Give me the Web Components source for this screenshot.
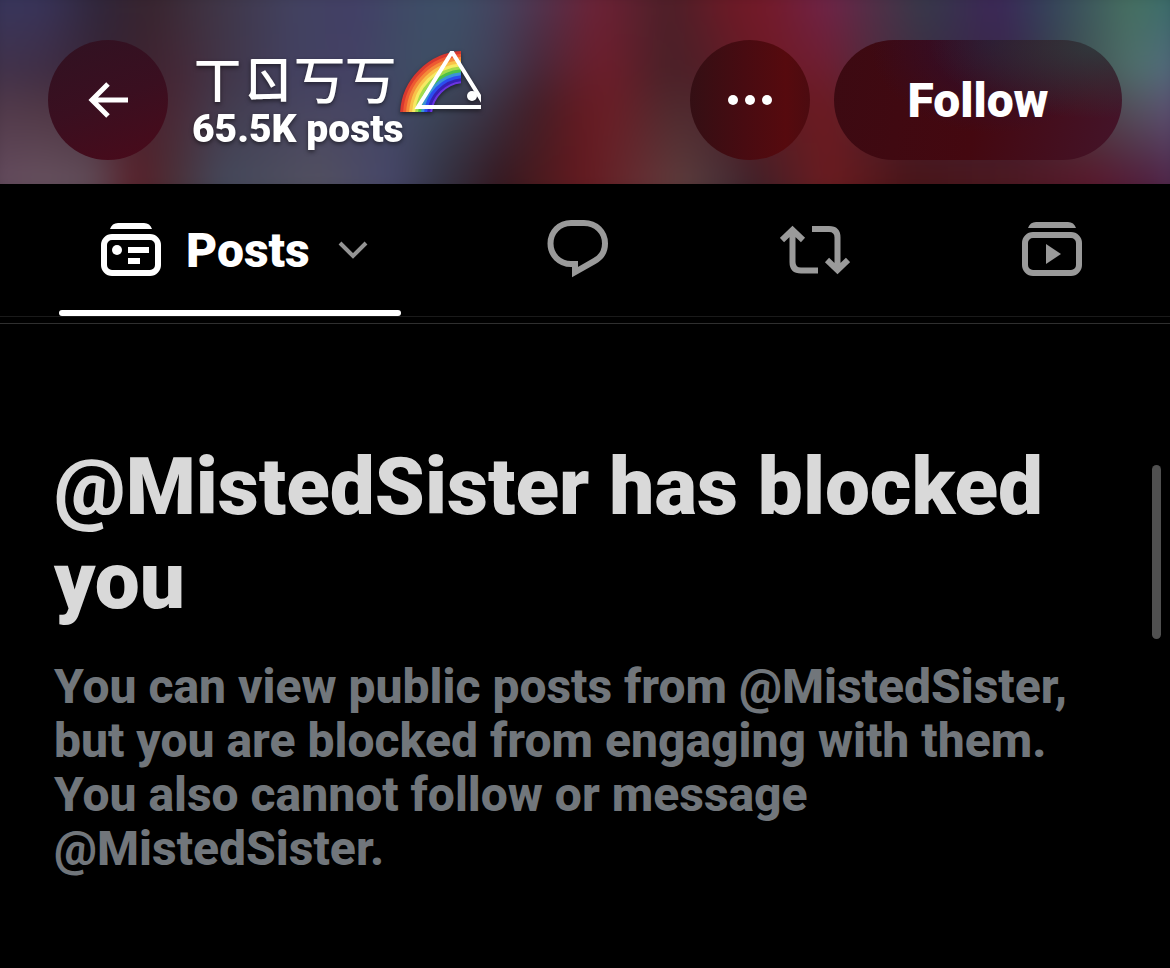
<!DOCTYPE html>
<html lang="en">
<head>
<meta charset="utf-8">
<meta name="viewport" content="width=device-width, initial-scale=1">
<title>Profile</title>
<style>
    body{
        margin:0;
        min-height:100vh;
        background:#000;
        color:#fff;
        font-family:Roboto, "Liberation Sans", sans-serif;
    }
</style>
</head>
<body>
<profile-page>
    <profile-header slot="header" posts="65.5K posts">ㄒㄖ丂丂</profile-header>
    <profile-tabs slot="tabs"></profile-tabs>
    <blocked-notice>
        <span slot="title">@MistedSister has blocked you</span>
        You can view public posts from @MistedSister, but you are blocked from engaging with them. You also cannot follow or message @MistedSister.
    </blocked-notice>
</profile-page>

<script>
const makeTemplate = (html) => {
    const template = document.createElement('template');
    template.innerHTML = html;
    return template;
};

const pageTemplate = makeTemplate(`
<style>
    :host{
        display:block;
        position:relative;
        min-height:100vh;
    }
    /* scroll indicator, lies over the content */
    .thumb{
        position:absolute;
        right:9px;
        top:48%;
        width:9px;
        height:18%;
        border-radius:5px;
        background:#505050;
    }
</style>
<slot name="header"></slot>
<slot name="tabs"></slot>
<main><slot></slot></main>
<div class="thumb"></div>
`);

class ProfilePage extends HTMLElement {
    constructor(){
        super();
        this.attachShadow({mode:'open'});
        this.shadowRoot.appendChild(pageTemplate.content.cloneNode(true));
    }
}

const bannerTemplate = makeTemplate(`
<style>
    :host{
        display:grid;
        overflow:hidden;
    }
    :host > *{
        grid-area:1 / 1;
    }
    .cover{
        display:grid;
        margin:-20px;
        filter:blur(12px);
    }
    .cover > div{
        grid-area:1 / 1;
    }
    .middle{
        background:linear-gradient(90deg, #4a3444 0%, #452a38 6%, #3c2230 11%, #4a2636 16%, #42384c 21%, #444060 26%, #454364 31%, #3f5064 37%, #3f3f54 42%, #42202c 46%, #5e1c24 49%, #6d1c26 52%, #482228 57%, #4c2028 60%, #6c1a22 65%, #6e1a22 70%, #502838 74%, #3a2840 80%, #3a2842 86%, #44504c 91%, #587078 96%, #686090 100%);
    }
    .top{
        background:linear-gradient(90deg, #38365c 0%, #38345a 5%, #30263a 10%, #38242e 14%, #3f3444 19%, #424260 26%, #423f66 31%, #3f4a66 35%, #3d5068 39%, #45435f 43%, #55304a 47%, #6d2236 51%, #4c1f28 57%, #6c1a26 62%, #741a2a 65%, #6e2448 70%, #503048 74%, #36394a 78%, #3c2657 84%, #34405a 88%, #467060 95%, #356a70 100%);
        mask-image:linear-gradient(#000 10%, transparent 60%);
    }
    .bottom{
        background:linear-gradient(90deg, #62485c 0%, #66505e 5%, #604c58 9%, #582029 13%, #4a3038 16%, #44485a 20%, #525060 28%, #464668 34%, #343344 38%, #351820 43%, #4a1a1e 46%, #641a20 50%, #643034 55%, #5c3c3c 58%, #4a3238 61%, #402028 64%, #6a1c20 70%, #481418 77%, #4c1820 85%, #58182c 92%, #502040 97%, #503058 100%);
        mask-image:linear-gradient(transparent 40%, #000 90%);
    }
    .content{
        position:relative;
    }
</style>
<div class="cover">
    <div class="middle"></div>
    <div class="top"></div>
    <div class="bottom"></div>
</div>
<div class="content"><slot></slot></div>
`);

// Blurred cover photo, built from three colour rows faded into each other
class BlurBanner extends HTMLElement {
    constructor(){
        super();
        this.attachShadow({mode:'open'});
        this.shadowRoot.appendChild(bannerTemplate.content.cloneNode(true));
    }
}

const headerTemplate = makeTemplate(`
<style>
    :host{
        display:block;
    }
    header{
        display:flex;
        align-items:center;
        gap:24px;
        padding:40px 48px 24px;
    }
    button{
        display:flex;
        flex:none;
        align-items:center;
        justify-content:center;
        width:120px;
        height:120px;
        padding:0;
        border:none;
        border-radius:60px;
        color:#fff;
        font:900 48px Roboto, "Liberation Sans", sans-serif;
        cursor:pointer;
    }
    .back{
        background:linear-gradient(160deg, #301222, #3a0f20 50%, #4a0a1a);
    }
    .more{
        background:linear-gradient(90deg, #340f14, #480b11 45%, #560a0e 80%, #4c0b10);
    }
    .follow{
        width:288px;
        background:
            radial-gradient(ellipse at 92% 5%, #30383c, transparent 45%),
            radial-gradient(ellipse at 55% 0%, #2c1030, transparent 55%),
            linear-gradient(100deg, #3c0a12, #440810 50%, #44142a);
    }
    .title{
        flex:1;
        min-width:0;
        padding-bottom:4px;
        filter:drop-shadow(0 2px 2px rgba(0,0,0,.5));
    }
    h1{
        display:flex;
        align-items:flex-start;
        gap:4px;
        margin:0;
        font:500 51px/52px "Noto Sans CJK TC", "Noto Sans CJK SC", sans-serif;
    }
    p{
        margin:0;
        font-size:39px;
        font-weight:900;
        line-height:34px;
    }
    svg{
        display:block;
        flex:none;
    }
</style>
<blur-banner>
    <header>
        <button class="back" aria-label="Back">
            <svg width="40" height="36" viewBox="0 0 40 36" fill="none" stroke="#fff" stroke-width="5">
                <path d="M40 18H4M20 2 4 18 20 34"/>
            </svg>
        </button>
        <div class="title">
            <h1>
                <span><slot></slot></span>
                <svg width="81" height="61" viewBox="0 0 81 61" fill="none" aria-hidden="true">
                    <clipPath id="bow"><path d="M0 0H61V61H0z"/></clipPath>
                    <g clip-path="url(#bow)" stroke-width="4">
                        <circle cx="65" cy="65" r="63" stroke="#d8382f"/>
                        <circle cx="65" cy="65" r="60" stroke="#ee5a32"/>
                        <circle cx="65" cy="65" r="57" stroke="#f48c3a"/>
                        <circle cx="65" cy="65" r="54" stroke="#f8c24a"/>
                        <circle cx="65" cy="65" r="51" stroke="#f6ea62"/>
                        <circle cx="65" cy="65" r="48" stroke="#a4dc4c"/>
                        <circle cx="65" cy="65" r="45" stroke="#4cc04a"/>
                        <circle cx="65" cy="65" r="42" stroke="#3a94d8"/>
                        <circle cx="65" cy="65" r="39" stroke="#2c4cf0"/>
                        <circle cx="65" cy="65" r="36" stroke="#3620b4"/>
                        <circle cx="65" cy="65" r="34" stroke="#6a34e0" stroke-width="2"/>
                    </g>
                    <path d="M88 56H18L52 1 86 56" stroke="#fff" stroke-width="4"/>
                    <circle cx="72" cy="45" r="5" fill="#fff"/>
                </svg>
            </h1>
            <p></p>
        </div>
        <button class="more" aria-label="More">
            <svg width="46" height="12" viewBox="0 0 46 12" fill="#fff">
                <circle cx="6" cy="6" r="5"/>
                <circle cx="23" cy="6" r="5"/>
                <circle cx="40" cy="6" r="5"/>
            </svg>
        </button>
        <button class="follow">Follow</button>
    </header>
</blur-banner>
`);

class ProfileHeader extends HTMLElement {
    constructor(){
        super();
        this.attachShadow({mode:'open'});
        this.shadowRoot.appendChild(headerTemplate.content.cloneNode(true));
    }

    connectedCallback(){
        this.shadowRoot.querySelector('p').textContent = this.getAttribute('posts');
    }
}

const tabsTemplate = makeTemplate(`
<style>
    :host{
        display:block;
        padding-bottom:6px;
        border-bottom:1px solid #2f2f2f;
    }
    nav{
        display:flex;
        height:132px;
        border-bottom:1px solid #1a1a1a;
    }
    button{
        display:flex;
        flex:1;
        align-items:center;
        justify-content:center;
        padding:0;
        border:none;
        background:none;
        color:#9a9a9a;
        cursor:pointer;
    }
    .active{
        position:relative;
        flex:none;
        gap:25px;
        margin:0 59px;
        padding:0 33px 0 42px;
        color:#fff;
        font:900 48px Roboto, "Liberation Sans", sans-serif;
    }
    .active::after{
        content:"";
        position:absolute;
        left:0;
        right:0;
        bottom:0;
        height:6px;
        border-radius:3px;
        background:#fff;
    }
    .label{
        display:flex;
        align-items:center;
        gap:28px;
    }
    svg{
        display:block;
        flex:none;
    }
</style>
<nav>
    <button class="active" aria-current="page">
        <svg width="60" height="54" viewBox="0 0 60 54" fill="currentColor">
            <path d="M9 6Q11 0 17 0H43Q49 0 51 6z"/>
            <rect x="3" y="14" width="54" height="36" rx="8" fill="none" stroke="currentColor" stroke-width="6"/>
            <circle cx="16" cy="27" r="5"/>
            <path d="M27 24H48V30H27zM27 35H39V41H27z"/>
        </svg>
        <span class="label">
            <span>Posts</span>
            <svg width="30" height="18" viewBox="0 0 30 18" fill="none" stroke="#949494" stroke-width="4">
                <path d="M2 2 15 15 28 2"/>
            </svg>
        </span>
    </button>
    <button aria-label="Replies">
        <svg width="62" height="62" viewBox="0 0 62 62" fill="none" stroke="currentColor" stroke-width="6">
            <path d="M24 4H37C49 4 58 13 58 24.5C58 32 54 38.5 47.5 42L28 53V45H24C12.5 45 3.500 36 3.500 24.5C3.500 13 12.5 4 24 4z"/>
        </svg>
    </button>
    <button aria-label="Reposts">
        <svg width="70" height="50" viewBox="0 0 70 50" fill="none" stroke="currentColor" stroke-width="6">
            <path d="M2 15 12.5 5 23 15M12.5 6V37Q12.5 45.5 21 45.5H38"/>
            <path d="M68 35 57.5 45 47 35M57.5 44V12.5Q57.5 4 49 4H32"/>
        </svg>
    </button>
    <button aria-label="Videos">
        <svg width="60" height="58" viewBox="0 0 60 58" fill="currentColor">
            <path d="M6 7Q8 1 14 1H46Q52 1 54 7z"/>
            <rect x="3" y="14" width="54" height="38" rx="8" fill="none" stroke="currentColor" stroke-width="6"/>
            <path d="M24 23V43L39 33z"/>
        </svg>
    </button>
</nav>
`);

class ProfileTabs extends HTMLElement {
    constructor(){
        super();
        this.attachShadow({mode:'open'});
        this.shadowRoot.appendChild(tabsTemplate.content.cloneNode(true));
    }
}

const noticeTemplate = makeTemplate(`
<style>
    :host{
        display:block;
        padding:116px 96px 48px 54px;
    }
    h2{
        margin:0 0 32px;
        color:#d9d9d9;
        font-size:80px;
        font-weight:900;
        line-height:94px;
    }
    p{
        margin:0;
        color:#71767b;
        font-size:48px;
        font-weight:800;
        line-height:54px;
    }
</style>
<h2><slot name="title"></slot></h2>
<p><slot></slot></p>
`);

class BlockedNotice extends HTMLElement {
    constructor(){
        super();
        this.attachShadow({mode:'open'});
        this.shadowRoot.appendChild(noticeTemplate.content.cloneNode(true));
    }
}

window.customElements.define('blur-banner',BlurBanner);
window.customElements.define('profile-header',ProfileHeader);
window.customElements.define('profile-tabs',ProfileTabs);
window.customElements.define('blocked-notice',BlockedNotice);
window.customElements.define('profile-page',ProfilePage);
</script>
</body>
</html>
